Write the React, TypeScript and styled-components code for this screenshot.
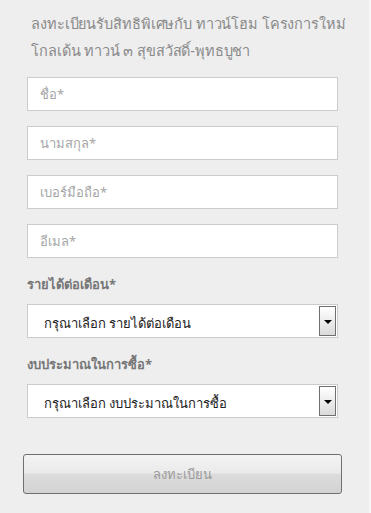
import styled, { createGlobalStyle } from "styled-components";

const GlobalStyle = createGlobalStyle`
  html, body {
    margin: 0;
    padding: 0;
    background: #eeeeee;
  }
  body {
    font-family: "Noto Sans", "DejaVu Sans", sans-serif;
  }
`

const Page = styled.div`
  width: 371px;
  min-height: 513px;
  box-sizing: border-box;
  padding: 10px 31px 0 27px;
  background: #eeeeee;
  border-right: 2px solid #f6f6f6;
`

const Title = styled.h2`
  margin: 0 0 13px;
  padding-left: 4px;
  font-size: 14.5px;
  font-weight: normal;
  line-height: 27px;
  color: #8a8a8a;
  white-space: nowrap;
  letter-spacing: -0.1px;
`

const Form = styled.form`
  display: flex;
  flex-direction: column;
`

const TextInput = styled.input`
  box-sizing: border-box;
  height: 34px;
  width: 100%;
  margin: 0 0 15px;
  padding: 0 12px;
  border: 1px solid #cccccc;
  background: #ffffff;
  font-family: inherit;
  font-size: 13px;
  color: #333;
  outline: none;
  &::placeholder {
    color: #a6a6a6;
  }
`

const Label = styled.label`
  display: block;
  margin: 1px 0 10px;
  font-size: 13px;
  font-weight: bold;
  line-height: 20px;
  color: #777777;
`

const SelectBox = styled.div`
  box-sizing: border-box;
  display: flex;
  align-items: stretch;
  height: 34px;
  margin-bottom: 15px;
  padding: 1px;
  border: 1px solid #cccccc;
  background: #ffffff;
`

const Select = styled.select`
  flex: 1;
  appearance: none;
  border: none;
  background: transparent;
  padding: 4px 0 0 15px;
  font-family: inherit;
  font-size: 13px;
  color: #222222;
  outline: none;
`

const ArrowButton = styled.div`
  box-sizing: border-box;
  width: 17px;
  display: flex;
  align-items: center;
  justify-content: center;
  border: 1px solid #6f6f6f;
  background: linear-gradient(#ffffff, #dadada);
`

const Arrow = styled.span`
  width: 0;
  height: 0;
  border-left: 4px solid transparent;
  border-right: 4px solid transparent;
  border-top: 4px solid #000;
  margin-top: 1px;
`

const Submit = styled.button`
  box-sizing: border-box;
  height: 40px;
  margin: 21px -4px 0;
  border: 1px solid #707070;
  border-radius: 3px;
  background: linear-gradient(#f3f3f3 0%, #eaeaea 48%, #dcdcdc 50%, #d3d3d3 100%);
  font-family: inherit;
  font-size: 13px;
  color: #9a9a9a;
  cursor: pointer;
`

type Choice = { label: string; placeholder: string }

const inputs = ["ชื่อ*", "นามสกุล*", "เบอร์มือถือ*", "อีเมล*"]

const choices: Choice[] = [
  { label: "รายได้ต่อเดือน*", placeholder: "กรุณาเลือก รายได้ต่อเดือน" },
  { label: "งบประมาณในการซื้อ*", placeholder: "กรุณาเลือก งบประมาณในการซื้อ" },
]

export default function App() {
  return (
    <Page>
      <GlobalStyle />
      <Title>
        ลงทะเบียนรับสิทธิพิเศษกับ ทาวน์โฮม โครงการใหม่
        <br />
        โกลเด้น ทาวน์ ๓ สุขสวัสดิ์-พุทธบูชา
      </Title>
      <Form onSubmit={(e) => e.preventDefault()}>
        {inputs.map((p) => (
          <TextInput key={p} type="text" placeholder={p} />
        ))}
        {choices.map((c) => (
          <div key={c.label}>
            <Label>{c.label}</Label>
            <SelectBox>
              <Select defaultValue="">
                <option value="">{c.placeholder}</option>
              </Select>
              <ArrowButton>
                <Arrow />
              </ArrowButton>
            </SelectBox>
          </div>
        ))}
        <Submit type="submit">ลงทะเบียน</Submit>
      </Form>
    </Page>
  )
}
